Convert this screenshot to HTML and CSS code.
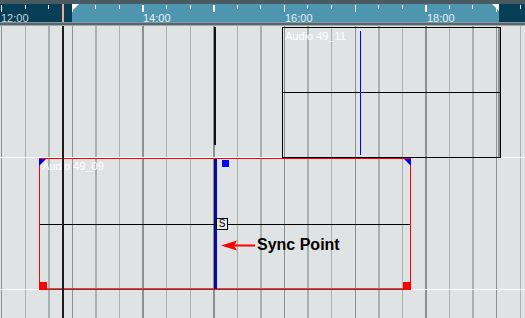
FILE: index.html
```html
<!DOCTYPE html>
<html lang="en">
<head>
    <meta charset="UTF-8">
    <title>Arrange - Sync Point</title>
    <link rel="stylesheet" href="styles.css">
</head>
<body>
    <div class="topbar"></div>

    <!-- time ruler -->
    <div class="ruler">
        <div class="ruler-pre"></div>
        <div class="ruler-range">
            <span class="loc loc-left"></span>
            <span class="loc loc-right"></span>
        </div>
        <div class="ruler-post"></div>
        <div class="ticks"></div>
        <span class="rlabel dim" style="left: 1px">12:00</span>
        <span class="rlabel" style="left: 143px">14:00</span>
        <span class="rlabel" style="left: 285px">16:00</span>
        <span class="rlabel" style="left: 427px">18:00</span>
        <span class="playhead"></span>
    </div>
    <div class="ruler-edge"></div>

    <!-- tracks -->
    <div class="arrange">
        <div class="track track1"></div>
        <div class="track track2"></div>
        <div class="track track3"></div>

        <span class="drag-line"></span>

        <div class="event event1">
            <div class="half top"></div>
            <div class="half"></div>
            <span class="ename">Audio 49_11</span>
            <span class="ev1-sync"></span>
        </div>

        <div class="event event2">
            <div class="half top"></div>
            <div class="half"></div>
            <span class="corner tl"></span>
            <span class="corner tr"></span>
            <span class="handle bl"></span>
            <span class="handle br"></span>
            <span class="ename">Audio 49_09</span>
            <span class="sync-black"></span>
            <span class="sync-blue"></span>
            <span class="sync-square"></span>
            <span class="sync-s">S</span>
        </div>

        <div class="callout">
            <svg width="34" height="11" viewBox="0 0 34 11">
                <polygon points="0,5.5 16,0.5 13,5.5 16,10.5" fill="#ff0000"/>
                <rect x="13" y="4.5" width="21" height="2" fill="#ff0000"/>
            </svg>
            <span class="callout-text">Sync Point</span>
        </div>

        <span class="cursor"></span>
    </div>
</body>
</html>
```

FILE: styles.css
```css
body {
    margin: 0;
    width: 525px;
    height: 318px;
    overflow: hidden;
    background-color: #dfe3e3;
    font-family: "Liberation Sans", Arial, sans-serif;
}

.topbar {
    height: 4px;
    background-color: #4a5a61;
}

/* ruler */
.ruler {
    position: relative;
    display: flex;
    height: 18px;
}
.ruler-pre {
    width: 72px;
    background-color: #073f57;
}
.ruler-range {
    position: relative;
    flex: 1;
    background-color: #4e96af;
}
.ruler-post {
    width: 26px;
    background-color: #073f57;
}
.ticks {
    position: absolute;
    inset: 0;
    background-image:
        repeating-linear-gradient(90deg, #ffffff 0 1.5px, transparent 1.5px 70.71px),
        repeating-linear-gradient(90deg, #e8eef0 0 1px, transparent 1px 23.57px);
    background-size: 100% 7px, 100% 4px;
    background-position: 1px 1px, 1px 1px;
    background-repeat: repeat-x;
}
.loc {
    position: absolute;
    top: 0;
    width: 0;
    height: 0;
}
.loc-left {
    left: 0;
    border-top: 7px solid #ffffff;
    border-right: 7px solid transparent;
}
.loc-right {
    right: 0;
    border-top: 7px solid #ffffff;
    border-left: 7px solid transparent;
}
.rlabel {
    position: absolute;
    top: 8px;
    font-size: 11px;
    line-height: 12px;
    color: #e4eff3;
}
.rlabel.dim {
    color: #c9d6dc;
}
.playhead {
    position: absolute;
    left: 62px;
    top: 0;
    width: 2px;
    height: 18px;
    background-color: #f2a88c;
}
.ruler-edge {
    height: 4px;
    background: linear-gradient(#8a989e 0 1px, #56666d 1px 3px, #a3adb1 3px 4px);
}

/* arrange area */
.arrange {
    position: relative;
    display: flex;
    flex-direction: column;
    height: 292px;
    background-color: #dfe3e3;
    background-image: repeating-linear-gradient(90deg,
        #8b9090 0 1.5px,
        transparent 1.5px 23.57px,
        #aab0b0 23.57px 25.07px,
        transparent 25.07px 47.14px,
        #aab0b0 47.14px 48.64px,
        transparent 48.64px 70.71px);
    background-position: 1px 0;
}
.track {
    border-bottom: 1px solid #ffffff;
}
.track1 {
    height: 131px;
}
.track2 {
    height: 131px;
}
.track3 {
    flex: 1;
    border-bottom: 0;
}

.cursor {
    position: absolute;
    left: 62px;
    top: 0;
    width: 2px;
    height: 100%;
    background-color: #1c1c1c;
}
.drag-line {
    position: absolute;
    left: 214px;
    top: 1px;
    width: 2px;
    height: 118px;
    background-color: #111111;
}

/* events */
.event {
    position: absolute;
    box-sizing: border-box;
    display: flex;
    flex-direction: column;
}
.half {
    flex: 1;
}
.half.top {
    border-bottom: 1px solid #000000;
}
.ename {
    position: absolute;
    left: 2px;
    top: 1px;
    font-size: 11px;
    line-height: 13px;
    color: #ffffff;
    white-space: nowrap;
}
.event1 {
    left: 282px;
    top: 1px;
    width: 219px;
    height: 131px;
    border: 1px solid #000000;
    box-shadow: inset -2px 0 0 #8a8e8e;
}
.event1 .ename {
    top: 2px;
}
.ev1-sync {
    position: absolute;
    left: 77px;
    top: 3px;
    bottom: 2px;
    width: 1px;
    background-color: #0000ff;
}
.event2 {
    left: 39px;
    top: 132px;
    width: 372px;
    height: 132px;
    border: 1px solid #ff0000;
    box-shadow: inset 0 -1px 0 #6a7272;
}
.corner {
    position: absolute;
    top: 0;
    width: 0;
    height: 0;
}
.corner.tl {
    left: -1px;
    border-top: 7px solid #0000ff;
    border-right: 7px solid transparent;
}
.corner.tr {
    right: -1px;
    border-top: 7px solid #0000ff;
    border-left: 7px solid transparent;
}
.handle {
    position: absolute;
    bottom: -1px;
    width: 8px;
    height: 8px;
    background-color: #ff0000;
}
.handle.bl {
    left: -1px;
}
.handle.br {
    right: -1px;
}
.sync-black {
    position: absolute;
    left: 174px;
    top: 0;
    bottom: 0;
    width: 1px;
    background-color: #111111;
}
.sync-blue {
    position: absolute;
    left: 175px;
    top: 0;
    bottom: 0;
    width: 2px;
    background-color: #0000ff;
}
.sync-square {
    position: absolute;
    left: 182px;
    top: 1px;
    width: 7px;
    height: 7px;
    background-color: #0000ff;
}
.sync-s {
    position: absolute;
    left: 176px;
    top: 59px;
    width: 12px;
    height: 12px;
    box-sizing: border-box;
    border: 1px solid #000000;
    background-color: #e6e9e9;
    font-size: 10px;
    line-height: 10px;
    text-align: center;
    color: #000000;
}

/* annotation */
.callout {
    position: absolute;
    left: 221px;
    top: 210px;
    display: flex;
    align-items: center;
    gap: 2px;
}
.callout svg {
    display: block;
    margin-top: 1px;
}
.callout-text {
    font-size: 16px;
    line-height: 18px;
    font-weight: bold;
    color: #000000;
}
```
